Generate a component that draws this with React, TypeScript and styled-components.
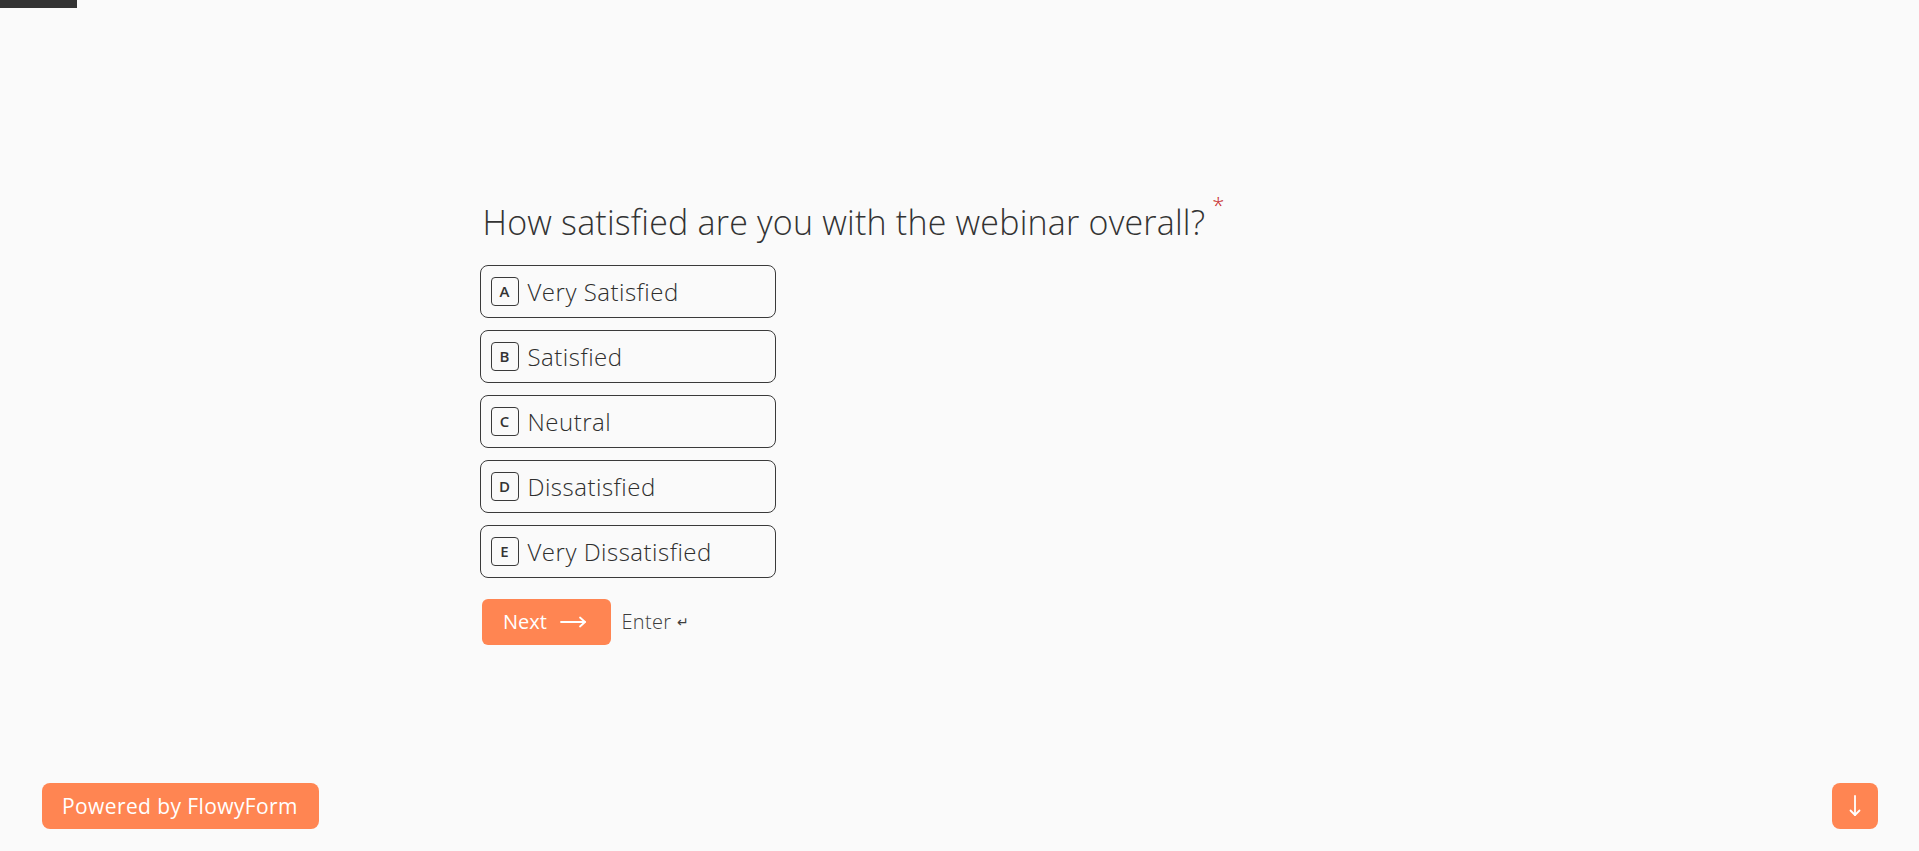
import React from "react";
import styled, { createGlobalStyle } from "styled-components";

const GlobalStyle = createGlobalStyle`
  html, body {
    margin: 0;
    padding: 0;
    background: #fafafa;
    font-family: "Open Sans", "Lato", sans-serif;
    color: #333333;
  }
  * { box-sizing: border-box; }
`;

const Page = styled.div`
  height: 100vh;
  display: flex;
  flex-direction: column;
`;

const ProgressTrack = styled.div`
  height: 8px;
  width: 100%;
  flex: none;
`;

const ProgressFill = styled.div`
  height: 100%;
  background: #333333;
`;

const Main = styled.main`
  flex: 1;
  display: flex;
  align-items: center;
  justify-content: center;
  padding-top: 52px;
`;

const Form = styled.div`
  width: 960px;
  display: flex;
  flex-direction: column;
`;

const Question = styled.h1`
  margin: 0 0 20px 3px;
  font-size: 34px;
  line-height: 46px;
  font-weight: 300;
  color: #333333;
  letter-spacing: 0.2px;
`;

const Required = styled.span`
  color: #c62828;
  font-size: 22px;
  vertical-align: 22px;
  margin-left: 7px;
  line-height: 0;
`;

const Options = styled.div`
  display: flex;
  flex-direction: column;
  gap: 12px;
`;

const Option = styled.button`
  width: 296px;
  height: 53px;
  display: flex;
  align-items: center;
  gap: 9px;
  padding: 0 0 0 10px;
  border: 1.3px solid #3a3a3a;
  border-radius: 8px;
  background: transparent;
  font-family: inherit;
  cursor: pointer;
  text-align: left;
`;

const Badge = styled.span`
  width: 28px;
  height: 29px;
  display: flex;
  align-items: center;
  justify-content: center;
  border: 1.3px solid #3a3a3a;
  border-radius: 4px;
  font-size: 15px;
  font-weight: 600;
  color: #333333;
  flex: none;
`;

const OptionLabel = styled.span`
  font-size: 24px;
  font-weight: 300;
  letter-spacing: 0.5px;
  color: #2e2e2e;
`;

const Actions = styled.div`
  display: flex;
  align-items: center;
  margin-top: 21px;
  padding-left: 2px;
`;

const NextButton = styled.button`
  height: 46px;
  width: 129px;
  display: flex;
  align-items: center;
  justify-content: center;
  gap: 13px;
  border: none;
  border-radius: 6px;
  background: #ff8552;
  color: #ffffff;
  font-family: inherit;
  font-size: 20px;
  font-weight: 400;
  cursor: pointer;
  padding: 0 2px 0 0;
`;

const EnterHint = styled.span`
  margin-left: 11px;
  font-size: 20px;
  font-weight: 300;
  letter-spacing: 0.3px;
  color: #3d3d3d;
  display: flex;
  align-items: center;
  gap: 6px;
`;

const EnterGlyph = styled.span`
  font-family: "DejaVu Sans", sans-serif;
  font-size: 14px;
  margin-top: 1px;
`;

const Footer = styled.footer`
  display: flex;
  justify-content: space-between;
  align-items: center;
  padding: 0 41px 22px 42px;
  flex: none;
`;

const Powered = styled.a`
  height: 46px;
  display: flex;
  align-items: center;
  padding: 0 21px 0 20px;
  border-radius: 8px;
  background: #ff8552;
  color: #ffffff;
  font-size: 21px;
  font-weight: 400;
  letter-spacing: 0.4px;
  text-decoration: none;
`;

const ScrollButton = styled.button`
  width: 46px;
  height: 46px;
  display: flex;
  align-items: center;
  justify-content: center;
  border: none;
  border-radius: 8px;
  background: #ff8552;
  padding: 0;
  cursor: pointer;
`;

const options = [
  { key: "A", label: "Very Satisfied" },
  { key: "B", label: "Satisfied" },
  { key: "C", label: "Neutral" },
  { key: "D", label: "Dissatisfied" },
  { key: "E", label: "Very Dissatisfied" },
];

const LongArrow = () => (
  <svg width="27" height="12" viewBox="0 0 27 12" fill="none">
    <path d="M1 6H25" stroke="#fff" strokeWidth="1.8" strokeLinecap="round" />
    <path d="M20 1.5L25 6L20 10.5" stroke="#fff" strokeWidth="1.8" strokeLinecap="round" strokeLinejoin="round" />
  </svg>
);

const DownArrow = () => (
  <svg width="14" height="24" viewBox="0 0 14 24" fill="none">
    <path d="M7 2V21" stroke="#fff" strokeWidth="1.8" strokeLinecap="round" />
    <path d="M2.5 16.5L7 21L11.5 16.5" stroke="#fff" strokeWidth="1.8" strokeLinecap="round" strokeLinejoin="round" />
  </svg>
);

export default function App() {
  const progress = 4;
  return (
    <>
      <GlobalStyle />
      <Page>
        <ProgressTrack>
          <ProgressFill style={{ width: `${progress}%` }} />
        </ProgressTrack>
        <Main>
          <Form>
            <Question>
              How satisfied are you with the webinar overall?
              <Required>*</Required>
            </Question>
            <Options>
              {options.map((o) => (
                <Option key={o.key} type="button">
                  <Badge>{o.key}</Badge>
                  <OptionLabel>{o.label}</OptionLabel>
                </Option>
              ))}
            </Options>
            <Actions>
              <NextButton type="button">
                Next
                <LongArrow />
              </NextButton>
              <EnterHint>
                Enter <EnterGlyph>↵</EnterGlyph>
              </EnterHint>
            </Actions>
          </Form>
        </Main>
        <Footer>
          <Powered href="#">Powered by FlowyForm</Powered>
          <ScrollButton type="button" aria-label="Next question">
            <DownArrow />
          </ScrollButton>
        </Footer>
      </Page>
    </>
  );
}
